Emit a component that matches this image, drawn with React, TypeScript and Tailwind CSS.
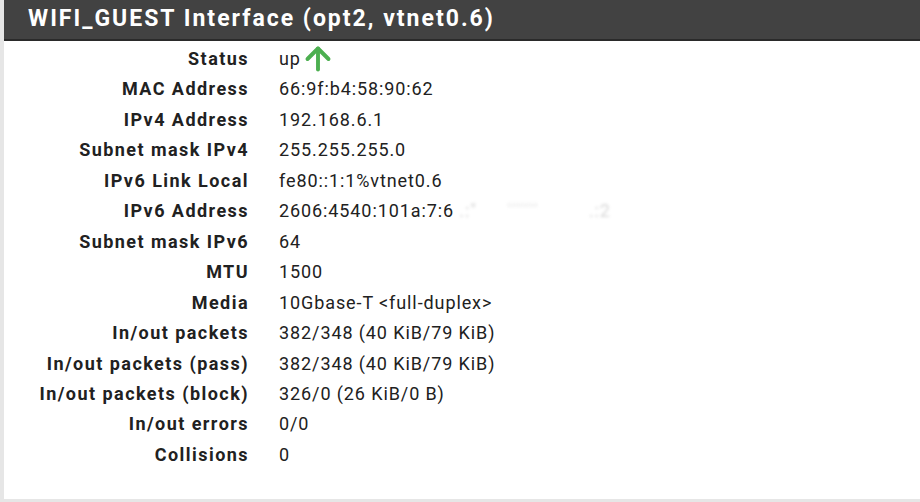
import { ArrowUp } from "lucide-react";

const rows: [string, string][] = [
  ["MAC Address", "66:9f:b4:58:90:62"],
  ["IPv4 Address", "192.168.6.1"],
  ["Subnet mask IPv4", "255.255.255.0"],
  ["IPv6 Link Local", "fe80::1:1%vtnet0.6"],
  ["IPv6 Address", ""],
  ["Subnet mask IPv6", "64"],
  ["MTU", "1500"],
  ["Media", "10Gbase-T <full-duplex>"],
  ["In/out packets", "382/348 (40 KiB/79 KiB)"],
  ["In/out packets (pass)", "382/348 (40 KiB/79 KiB)"],
  ["In/out packets (block)", "326/0 (26 KiB/0 B)"],
  ["In/out errors", "0/0"],
  ["Collisions", "0"],
];

export default function App() {
  return (
    <div className="w-[920px] h-[502px] bg-[#e6e6e6] pl-[4px] pb-[3px] font-['Roboto',sans-serif] overflow-hidden">
      <div className="h-full bg-white flex flex-col">
        {/* Panel heading */}
        <div className="h-[41px] bg-[#424242] border-b-2 border-[#2a2a2a] flex items-center pl-[24px]">
          <h2 className="text-white text-[23px] font-bold tracking-[2px]">
            WIFI_GUEST Interface (opt2, vtnet0.6)
          </h2>
        </div>

        {/* Interface details */}
        <dl className="grid grid-cols-[245px_1fr] gap-x-[30px] pt-[3px] text-[18px] leading-[30.45px] text-[#212121]">
          <dt className="text-right font-bold tracking-[1.45px]">Status</dt>
          <dd className="flex items-center h-[30.45px] tracking-[0.9px]">
            up
            <ArrowUp className="w-[36px] h-[36px] shrink-0 text-[#4caf50] -ml-[1px] -my-[4px]" strokeWidth={2.6} />
          </dd>
          {rows.map(([label, value]) => (
            <div key={label} className="contents">
              <dt className="text-right font-bold tracking-[1.45px]">{label}</dt>
              <dd className="tracking-[0.9px]">
                {label === "IPv6 Address" ? (
                  <span>
                    2606:4540:101a:7:6
                    <span className="blur-[1.5px] opacity-40 text-[#999]"> .:"</span>
                    <span className="ml-[30px] blur-[1.5px] opacity-25 text-[#aaa]">''''''''''</span>
                    <span className="ml-[50px] blur-[1.5px] opacity-40 text-[#999]">.:2</span>
                  </span>
                ) : (
                  value
                )}
              </dd>
            </div>
          ))}
        </dl>
      </div>
    </div>
  );
}
